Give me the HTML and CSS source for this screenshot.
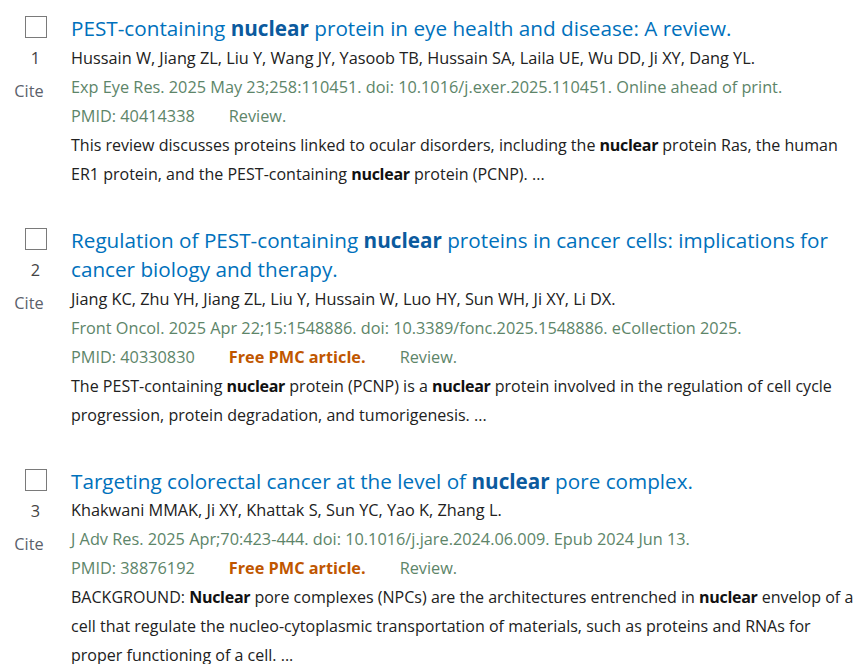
FILE: index.html
```html
<!DOCTYPE html>
<html>
<head>
<meta charset="utf-8">
<link rel="stylesheet" href="styles.css">
</head>
<body>
<div class="results">
  <article class="docsum">
    <div class="side">
      <span class="check"></span>
      <span class="num">1</span>
      <span class="cite">Cite</span>
    </div>
    <div class="content">
      <a class="title">PEST-containing <b>nuclear</b> protein in eye health and disease: A review.</a>
      <div class="authors">Hussain W, Jiang ZL, Liu Y, Wang JY, Yasoob TB, Hussain SA, Laila UE, Wu DD, Ji XY, Dang YL.</div>
      <div class="journal">Exp Eye Res. 2025 May 23;258:110451. doi: 10.1016/j.exer.2025.110451. Online ahead of print.</div>
      <div class="meta"><span class="pmid">PMID: 40414338</span><span class="type">Review.</span></div>
      <div class="snippet">This review discusses proteins linked to ocular disorders, including the <b>nuclear</b> protein Ras, the human ER1 protein, and the PEST-containing <b>nuclear</b> protein (PCNP). ...</div>
    </div>
  </article>
  <article class="docsum">
    <div class="side">
      <span class="check"></span>
      <span class="num">2</span>
      <span class="cite">Cite</span>
    </div>
    <div class="content">
      <a class="title">Regulation of PEST-containing <b>nuclear</b> proteins in cancer cells: implications for cancer biology and therapy.</a>
      <div class="authors">Jiang KC, Zhu YH, Jiang ZL, Liu Y, Hussain W, Luo HY, Sun WH, Ji XY, Li DX.</div>
      <div class="journal">Front Oncol. 2025 Apr 22;15:1548886. doi: 10.3389/fonc.2025.1548886. eCollection 2025.</div>
      <div class="meta"><span class="pmid">PMID: 40330830</span><span class="free">Free PMC article.</span><span class="type">Review.</span></div>
      <div class="snippet">The PEST-containing <b>nuclear</b> protein (PCNP) is a <b>nuclear</b> protein involved in the regulation of cell cycle progression, protein degradation, and tumorigenesis. ...</div>
    </div>
  </article>
  <article class="docsum">
    <div class="side">
      <span class="check"></span>
      <span class="num">3</span>
      <span class="cite">Cite</span>
    </div>
    <div class="content">
      <a class="title">Targeting colorectal cancer at the level of <b>nuclear</b> pore complex.</a>
      <div class="authors">Khakwani MMAK, Ji XY, Khattak S, Sun YC, Yao K, Zhang L.</div>
      <div class="journal">J Adv Res. 2025 Apr;70:423-444. doi: 10.1016/j.jare.2024.06.009. Epub 2024 Jun 13.</div>
      <div class="meta"><span class="pmid">PMID: 38876192</span><span class="free">Free PMC article.</span><span class="type">Review.</span></div>
      <div class="snippet">BACKGROUND: <b>Nuclear</b> pore complexes (NPCs) are the architectures entrenched in <b>nuclear</b> envelop of a cell that regulate the nucleo-cytoplasmic transportation of materials, such as proteins and RNAs for proper functioning of a cell. ...</div>
    </div>
  </article>
</div>
</body>
</html>
```

FILE: styles.css
```css
html, body {
  margin: 0;
  padding: 0;
  background: #ffffff;
}
body {
  font-family: "Open Sans", "Noto Sans", "Liberation Sans", sans-serif;
  color: #212121;
  font-size: 16.3px;
  line-height: 29px;
}
.results {
  display: flex;
  flex-direction: column;
  gap: 37px;
  padding-top: 14px;
}
.docsum {
  display: flex;
}
.side {
  width: 71px;
  flex: none;
  display: flex;
  flex-direction: column;
  align-items: center;
}
.check {
  display: block;
  width: 20px;
  height: 20px;
  border: 1px solid #7a7a7a;
  margin-top: 2px;
  box-sizing: content-box;
}
.num {
  display: block;
  margin-top: 6px;
  color: #444;
}
.cite {
  display: block;
  margin-top: 4px;
  margin-right: 13px;
  color: #5b616b;
}
.content {
  flex: 1;
  min-width: 0;
}
.title {
  display: block;
  color: #0071bc;
  font-size: 20.7px;
  line-height: 29.5px;
  text-decoration: none;
}
.title b {
  color: #0b5a9e;
  font-weight: 700;
}
.authors {
  color: #212121;
}
.journal {
  color: #5d8569;
}
.meta {
  display: flex;
  gap: 34px;
  color: #5d8569;
}
.free {
  color: #c05600;
  font-weight: 700;
}
.snippet {
  color: #212121;
  font-size: 16.05px;
}
.snippet b {
  color: #111;
  letter-spacing: -0.3px;
}
```
